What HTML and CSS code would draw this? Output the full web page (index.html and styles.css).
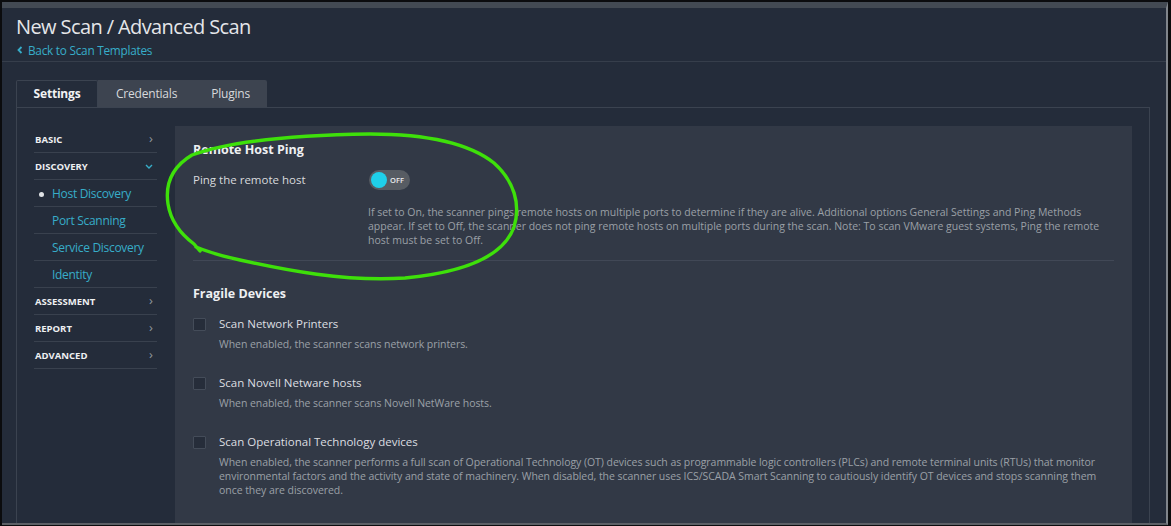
FILE: index.html
```html
<!DOCTYPE html>
<html lang="en">
<head>
<meta charset="utf-8">
<title>New Scan / Advanced Scan</title>
<link rel="stylesheet" href="styles.css">
</head>
<body>
<div class="frame">
  <header class="page-head">
    <h1 class="page-title">New Scan / Advanced Scan</h1>
    <a class="back-link" href="#"><svg class="back-chev" viewBox="0 0 6 8" width="6" height="8"><path d="M4.5 1 L1.5 4 L4.5 7" fill="none" stroke="currentColor" stroke-width="1.8"/></svg>Back to Scan Templates</a>
  </header>

  <div class="tabs">
    <div class="tab tab-active">Settings</div>
    <div class="tab tab-credentials">Credentials</div>
    <div class="tab tab-plugins">Plugins</div>
  </div>

  <div class="panel">
    <nav class="side">
      <div class="side-row side-head"><span>BASIC</span><span class="chev">›</span></div>
      <div class="side-row side-head"><span>DISCOVERY</span><svg class="chev-down" viewBox="0 0 8 5" width="8" height="5"><path d="M1 1 L4 4 L7 1" fill="none" stroke="currentColor" stroke-width="1.4"/></svg></div>
      <div class="side-row side-sub active"><span class="dot"></span>Host Discovery</div>
      <div class="side-row side-sub">Port Scanning</div>
      <div class="side-row side-sub">Service Discovery</div>
      <div class="side-row side-sub">Identity</div>
      <div class="side-row side-head"><span>ASSESSMENT</span><span class="chev">›</span></div>
      <div class="side-row side-head"><span>REPORT</span><span class="chev">›</span></div>
      <div class="side-row side-head"><span>ADVANCED</span><span class="chev">›</span></div>
    </nav>

    <main class="content">
      <section class="block block-ping">
        <h2 class="block-title">Remote Host Ping</h2>
        <div class="setting-row">
          <div class="setting-label">Ping the remote host</div>
          <div class="setting-control">
            <div class="toggle"><span class="knob"></span><span class="toggle-text">OFF</span></div>
            <p class="setting-desc">If set to On, the scanner pings remote hosts on multiple ports to determine if they are alive. Additional options General Settings and Ping Methods appear. If set to Off, the scanner does not ping remote hosts on multiple ports during the scan. Note: To scan VMware guest systems, Ping the remote host must be set to Off.</p>
          </div>
        </div>
      </section>

      <section class="block block-fragile">
        <h2 class="block-title">Fragile Devices</h2>
        <div class="check-row">
          <span class="checkbox"></span>
          <div class="check-body">
            <div class="check-label">Scan Network Printers</div>
            <p class="check-desc">When enabled, the scanner scans network printers.</p>
          </div>
        </div>
        <div class="check-row">
          <span class="checkbox"></span>
          <div class="check-body">
            <div class="check-label">Scan Novell Netware hosts</div>
            <p class="check-desc">When enabled, the scanner scans Novell NetWare hosts.</p>
          </div>
        </div>
        <div class="check-row">
          <span class="checkbox"></span>
          <div class="check-body">
            <div class="check-label">Scan Operational Technology devices</div>
            <p class="check-desc">When enabled, the scanner performs a full scan of Operational Technology (OT) devices such as programmable logic controllers (PLCs) and remote terminal units (RTUs) that monitor environmental factors and the activity and state of machinery. When disabled, the scanner uses ICS/SCADA Smart Scanning to cautiously identify OT devices and stops scanning them once they are discovered.</p>
          </div>
        </div>
      </section>
    </main>
  </div>
</div>

<svg class="annotation" viewBox="0 0 1171 526" width="1171" height="526">
  <path d="M200,251 L194,244 C182,235 171,223 168,204 C165,184 172,167 192,155 C230,141 300,135 370,134 C430,134 470,144 494,163 C514,181 521,204 514,227 C504,255 468,272 405,278 C345,282 285,270 240,260 C222,256 208,252 196,247" fill="none" stroke="#3ee00a" stroke-width="3.4" stroke-linecap="round" stroke-linejoin="round"/>
</svg>
</body>
</html>
```

FILE: styles.css
```css
* {
  box-sizing: border-box;
}

html, body {
  margin: 0;
  padding: 0;
  background: #0b0c0e;
  width: 1171px;
  height: 526px;
  overflow: hidden;
  font-family: "Open Sans", "Liberation Sans", sans-serif;
}

body {
  position: relative;
}

.frame {
  margin: 2px 3px 0 2px;
  height: 523px;
  background: #242c3a;
  border-top: 6px solid #434a53;
  border-right: 2px solid #80858b;
  border-bottom: 2px solid #5c6066;
  overflow: hidden;
}

.page-head {
  padding: 6px 0 2px 14px;
  border-bottom: 1px solid #363e4b;
}

.page-title {
  margin: 0;
  font-size: 20px;
  letter-spacing: -0.6px;
  line-height: 26px;
  font-weight: 400;
  color: #e4e6e9;
}

.back-link {
  display: flex;
  align-items: center;
  gap: 5px;
  height: 18px;
  margin-top: 1px;
  font-size: 11.8px;
  letter-spacing: -0.25px;
  color: #37adc9;
  text-decoration: none;
  padding-left: 1px;
}

.back-chev {
  display: block;
}

.tabs {
  display: flex;
  margin: 18px 0 0 14px;
  height: 27px;
}

.tab {
  font-size: 12px;
  letter-spacing: -0.2px;
  line-height: 27px;
  color: #d7d9dc;
  background: #3d4450;
}

.tab-active {
  width: 82px;
  text-align: center;
  font-weight: 700;
  color: #f2f3f4;
  background: #242c3a;
  border: 1px solid #3b4350;
  border-bottom: none;
  border-radius: 2px 2px 0 0;
  line-height: 26px;
}

.tab-credentials {
  padding: 0 17px 0 18px;
}

.tab-plugins {
  padding: 0 17px 0 17px;
  border-radius: 0 2px 0 0;
}

.panel {
  display: flex;
  gap: 18px;
  margin: 0 16px 0 14px;
  padding: 18px 17px 0 17px;
  border: 1px solid #3b4350;
  height: 440px;
}

.side {
  width: 123px;
  flex: none;
}

.side-row {
  display: flex;
  align-items: center;
  height: 27px;
  border-bottom: 1px solid #39414e;
}

.side-head {
  justify-content: space-between;
  font-size: 9.5px;
  font-weight: 700;
  color: #eef0f2;
  padding: 0 4px 0 1px;
}

.chev {
  font-size: 13px;
  font-weight: 400;
  color: #8f959d;
  margin-top: -2px;
}

.chev-down {
  color: #37adc9;
  display: block;
}

.side-sub {
  font-size: 12px;
  letter-spacing: -0.3px;
  color: #37adc9;
  padding-left: 18px;
  position: relative;
}

.dot {
  position: absolute;
  left: 5px;
  top: 12px;
  width: 5px;
  height: 5px;
  border-radius: 50%;
  background: #dfe2e5;
}

.content {
  flex: 1;
  background: #323946;
  padding: 15px 18px 0 18px;
}

.block-title {
  margin: 0;
  font-size: 12.5px;
  line-height: 18px;
  font-weight: 700;
  color: #eef0f2;
}

.block-ping {
  border-bottom: 1px solid #414856;
  padding-bottom: 13px;
}

.setting-row {
  display: flex;
  margin-top: 12px;
}

.setting-label {
  width: 175px;
  flex: none;
  font-size: 11.5px;
  line-height: 18px;
  color: #d8dadd;
}

.setting-control {
  flex: 1;
}

.toggle {
  position: relative;
  width: 41px;
  height: 20px;
  border-radius: 10px;
  background: #575c63;
  margin: -1px 0 0 1px;
}

.knob {
  position: absolute;
  left: 2px;
  top: 2px;
  width: 16px;
  height: 16px;
  border-radius: 50%;
  background: #1fcfe9;
}

.toggle-text {
  position: absolute;
  left: 21px;
  top: 0;
  font-size: 7.5px;
  line-height: 20px;
  font-weight: 600;
  color: #eceef0;
}

.setting-desc {
  margin: 15px 0 0 0;
  font-size: 10.5px;
  line-height: 14px;
  color: #9ba0a7;
}

.block-fragile {
  padding-top: 24px;
}

.check-row {
  display: flex;
  gap: 13px;
  margin-top: 12px;
}

.check-row + .check-row {
  margin-top: 23px;
}

.checkbox {
  flex: none;
  width: 13px;
  height: 13px;
  margin-top: 3px;
  background: #262d3a;
  border: 1px solid #444c59;
  border-radius: 1px;
}

.check-label {
  font-size: 11.5px;
  line-height: 18px;
  color: #dcdee1;
}

.check-desc {
  margin: 4px 0 0 0;
  font-size: 10.5px;
  letter-spacing: -0.05px;
  line-height: 14px;
  color: #9ba0a7;
}

.annotation {
  position: absolute;
  left: 0;
  top: 0;
  pointer-events: none;
}
```
